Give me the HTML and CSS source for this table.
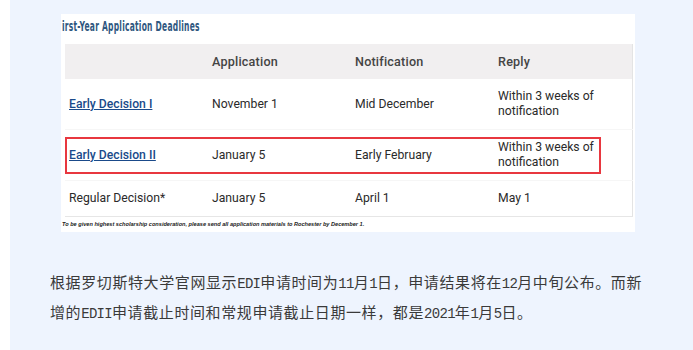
FILE: index.html
```html
<!DOCTYPE html>
<html lang="zh-CN">
<head>
    <meta charset="UTF-8">
    <meta name="viewport" content="width=device-width, initial-scale=1.0">
    <title>罗切斯特大学申请截止日期</title>
    <link rel="stylesheet" href="styles.css">
</head>
<body>
    <div class="article">
        <div class="figure">
            <div class="figure-title"><span>irst-Year Application Deadlines</span></div>
            <table class="deadlines">
                <thead>
                    <tr>
                        <th></th>
                        <th>Application</th>
                        <th>Notification</th>
                        <th>Reply</th>
                    </tr>
                </thead>
                <tbody>
                    <tr>
                        <td><a href="#">Early Decision I</a></td>
                        <td>November 1</td>
                        <td>Mid December</td>
                        <td>Within 3 weeks of notification</td>
                    </tr>
                    <tr>
                        <td><a href="#">Early Decision II</a></td>
                        <td>January 5</td>
                        <td>Early February</td>
                        <td>Within 3 weeks of notification</td>
                    </tr>
                    <tr>
                        <td>Regular Decision*</td>
                        <td>January 5</td>
                        <td>April 1</td>
                        <td>May 1</td>
                    </tr>
                </tbody>
            </table>
            <p class="footnote">To be given highest scholarship consideration, please send all application materials to Rochester by December 1.</p>
            <!-- highlight box around the ED II row -->
            <div class="highlight"></div>
        </div>

        <p class="text">根据罗切斯特大学官网显示<span class="en">EDI</span>申请时间为<span class="en">11</span>月<span class="en">1</span>日，申请结果将在<span class="en">12</span>月中旬公布。而新<br>增的<span class="en">EDII</span>申请截止时间和常规申请截止日期一样，都是<span class="en">2021</span>年<span class="en">1</span>月<span class="en">5</span>日。</p>
    </div>
</body>
</html>
```

FILE: styles.css
```css
body {
    margin: 0;
    background-color: #fff;
    height: 350px;
    overflow: hidden;
}
.article {
    margin-left: 10px;
    background-color: #eef4fe;
    padding: 14px 0 0 0;
    height: 350px;
    box-sizing: border-box;
}
.figure {
    position: relative;
    margin-left: 51px;
    width: 574px;
    background-color: #fff;
    padding: 0 2px 1px 4px;
    box-sizing: border-box;
}
.figure-title {
    font-family: "DejaVu Sans Condensed", "DejaVu Sans", sans-serif;
    font-size: 13.5px;
    font-weight: bold;
    color: #2f5780;
    height: 30px;
    line-height: 24px;
    margin-left: -3px;
    white-space: nowrap;
}
.figure-title span {
    display: inline-block;
    transform: scaleX(0.62);
    transform-origin: left center;
    letter-spacing: 0.4px;
}
.deadlines {
    width: 568px;
    border-collapse: collapse;
    table-layout: fixed;
    font-family: Roboto, "Liberation Sans", sans-serif;
    font-size: 12.2px;
    color: #2a2a2a;
    border-right: 1px solid #e4e4e4;
}
.deadlines th {
    background-color: #f1eff0;
    font-weight: 500;
    color: #444;
    text-align: left;
    height: 35px;
    padding: 0 4px;
    font-size: 12.6px;
    letter-spacing: 0.2px;
}
.deadlines td {
    padding: 10px 4px;
    line-height: 15px;
    border-bottom: 1px solid #f6f6f6;
}
.deadlines th:nth-child(-n+3),
.deadlines td:nth-child(-n+3) {
    width: 135px;
}
.deadlines tbody tr:first-child td,
.deadlines tbody tr:nth-child(2) td {
    height: 30px;
}
.deadlines tbody tr:last-child td {
    border-bottom: 1px solid #e6e6e6;
    height: 14px;
}
.deadlines a {
    color: #1a4a8a;
    text-decoration: underline;
    font-weight: 500;
}
.footnote {
    margin: 0;
    padding: 4px 0 4px 0;
    margin-left: -3px;
    font-family: "Liberation Sans", Arial, sans-serif;
    font-size: 5.6px;
    font-style: italic;
    font-weight: bold;
    color: #222;
}
.highlight {
    position: absolute;
    left: 4px;
    top: 123px;
    width: 536px;
    height: 37px;
    border: 2px solid #e8373f;
    box-sizing: border-box;
}
.text {
    margin: 36px 0 0 40px;
    width: 620px;
    font-family: "Noto Sans CJK SC", sans-serif;
    font-size: 15px;
    letter-spacing: 0.6px;
    line-height: 28px;
    color: #3a3a3a;
}
.text .en {
    font-family: "Liberation Mono", monospace;
    font-size: 14px;
    letter-spacing: -0.7px;
}
```
